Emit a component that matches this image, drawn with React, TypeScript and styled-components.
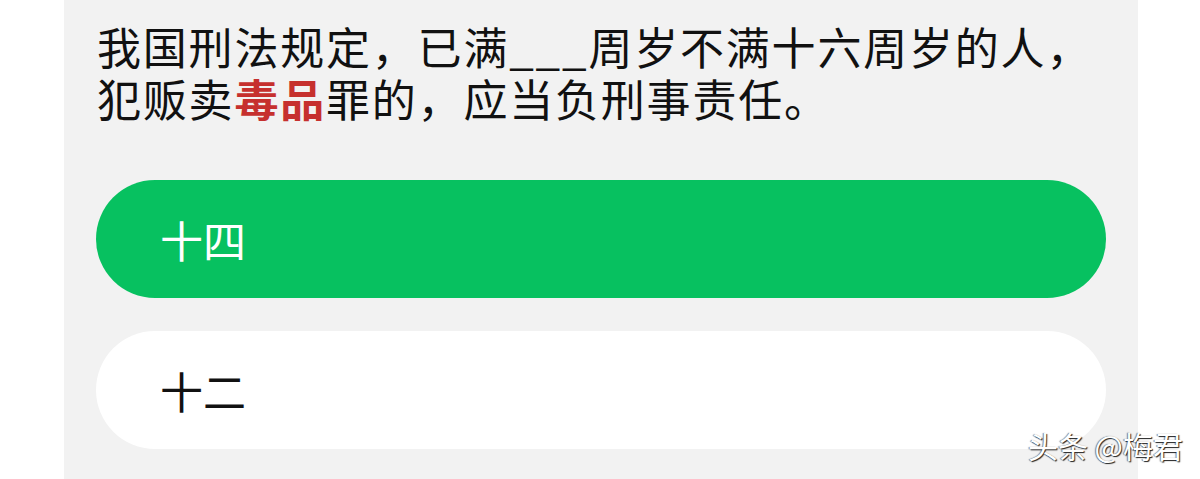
import React from 'react';
import styled, { createGlobalStyle } from 'styled-components';

const GlobalStyle = createGlobalStyle`
  html, body {
    margin: 0;
    padding: 0;
    background: #ffffff;
  }
  body {
    font-family: "Noto Sans CJK SC", "Noto Sans", sans-serif;
  }
`;

interface Option {
  id: string;
  label: string;
  selected: boolean;
}

const Page = styled.div`
  width: 1200px;
  height: 479px;
  overflow: hidden;
  position: relative;
  background: #ffffff;
`;

const Panel = styled.div`
  margin: 0 62px 0 64px;
  height: 479px;
  background: #f2f2f2;
  padding: 20px 32px 0 33px;
  box-sizing: border-box;
  display: flex;
  flex-direction: column;
`;

const Question = styled.p`
  margin: 0;
  font-size: 44px;
  line-height: 52px;
  color: #111111;
  letter-spacing: 1.8px;
  white-space: nowrap;
`;

const Highlight = styled.span`
  color: #c6302e;
  font-weight: 700;
`;

const Options = styled.div`
  margin-top: 56px;
  display: flex;
  flex-direction: column;
  gap: 33px;
`;

const OptionPill = styled.div<{ $selected: boolean }>`
  height: 118px;
  border-radius: 59px;
  margin-left: -1px;
  background: ${p => (p.$selected ? '#07c160' : '#ffffff')};
  color: ${p => (p.$selected ? '#ffffff' : '#111111')};
  display: flex;
  align-items: center;
  padding-left: 64px;
  font-size: 43px;
  letter-spacing: 0;
`;

const Watermark = styled.div`
  position: absolute;
  right: 17px;
  bottom: 12px;
  font-size: 30px;
  color: #ffffff;
  text-shadow: 1px 1px 1px #222, -1px 0 1px rgba(0, 0, 0, 0.5);
`;

const options: Option[] = [
  { id: 'a', label: '十四', selected: true },
  { id: 'b', label: '十二', selected: false },
];

export default function App() {
  return (
    <Page>
      <GlobalStyle />
      <Panel>
        <Question>
          我国刑法规定，已满___周岁不满十六周岁的人，
          <br />
          犯贩卖<Highlight>毒品</Highlight>罪的，应当负刑事责任。
        </Question>
        <Options>
          {options.map(o => (
            <OptionPill key={o.id} $selected={o.selected}>
              {o.label}
            </OptionPill>
          ))}
        </Options>
      </Panel>
      <Watermark>头条 @梅君</Watermark>
    </Page>
  );
}
